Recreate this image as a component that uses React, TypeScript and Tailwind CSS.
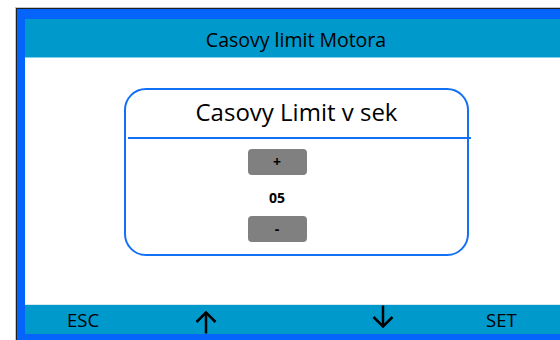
import React from "react";

const font = { fontFamily: '"Open Sans", "Liberation Sans", sans-serif' };

function UpArrow() {
  return (
    <svg width="22" height="23" viewBox="0 0 22 23" fill="none" stroke="#000" strokeWidth="2.5" strokeLinecap="butt">
      <path d="M11 1.5 V22.5" />
      <path d="M1.5 11 L11 1.5 L20.5 11" />
    </svg>
  );
}

function DownArrow() {
  return (
    <svg width="22" height="23" viewBox="0 0 22 23" fill="none" stroke="#000" strokeWidth="2.5" strokeLinecap="butt">
      <path d="M11 0.5 V21.5" />
      <path d="M1.5 12 L11 21.5 L20.5 12" />
    </svg>
  );
}

export default function App() {
  return (
    <div className="w-[560px] h-[340px] overflow-hidden bg-white" style={font}>
      <div className="ml-[15px] mt-[7px] w-[600px] border-t border-l border-[#c8c8c8]">
        <div className="border-t border-l border-[#202020] bg-[#0564fb] pl-[8px] pt-[10px] pb-[10px]">
          <div className="w-[542px] flex flex-col">
            <div className="h-[38px] bg-[#0099cc] flex items-center justify-center pt-[4px]">
              <span className="text-[19.5px] text-black leading-none">Casovy limit Motora</span>
            </div>
            <div className="h-[1px] bg-[#7fd0ee]" />
            <div className="h-[246px] bg-white pt-[30px] pl-[99px]">
              <div className="w-[345px] h-[168px] border-[2.5px] border-[#1270f7] rounded-[22px] flex flex-col">
                <div className="h-[46.5px] flex items-center justify-center pb-[3px]">
                  <span className="text-[24px] text-black leading-none">Casovy Limit v sek</span>
                </div>
                <div className="ml-[2px] w-[343px] h-[2px] bg-[#1270f7] shrink-0" />
                <div className="ml-[121.5px] w-[59px] flex flex-col items-center pt-[10px]">
                  <div className="w-[59px] h-[26px] rounded-[4px] bg-[#808080] flex items-center justify-center">
                    <span className="text-[14px] font-bold text-black leading-none">+</span>
                  </div>
                  <div className="h-[41px] flex items-center justify-center pt-[5px]">
                    <span className="text-[14px] font-bold text-black leading-none">05</span>
                  </div>
                  <div className="w-[59px] h-[26px] rounded-[4px] bg-[#808080] flex items-center justify-center">
                    <span className="text-[14px] font-bold text-black leading-none">-</span>
                  </div>
                </div>
              </div>
            </div>
            <div className="h-[1px] bg-[#d6e9f0]" />
            <div className="h-[29px] bg-[#0099cc] flex items-center">
              <div className="ml-[42px] w-[128px] flex items-center">
                <span className="text-[18.5px] text-black leading-none pt-[2px]">ESC</span>
              </div>
              <div className="w-[177px] flex items-center pt-[5px]">
                <UpArrow />
              </div>
              <div className="w-[114px] flex items-center pb-[6px]">
                <DownArrow />
              </div>
              <div className="flex items-center">
                <span className="text-[18.5px] text-black leading-none pt-[2px]">SET</span>
              </div>
            </div>
          </div>
        </div>
      </div>
    </div>
  );
}
